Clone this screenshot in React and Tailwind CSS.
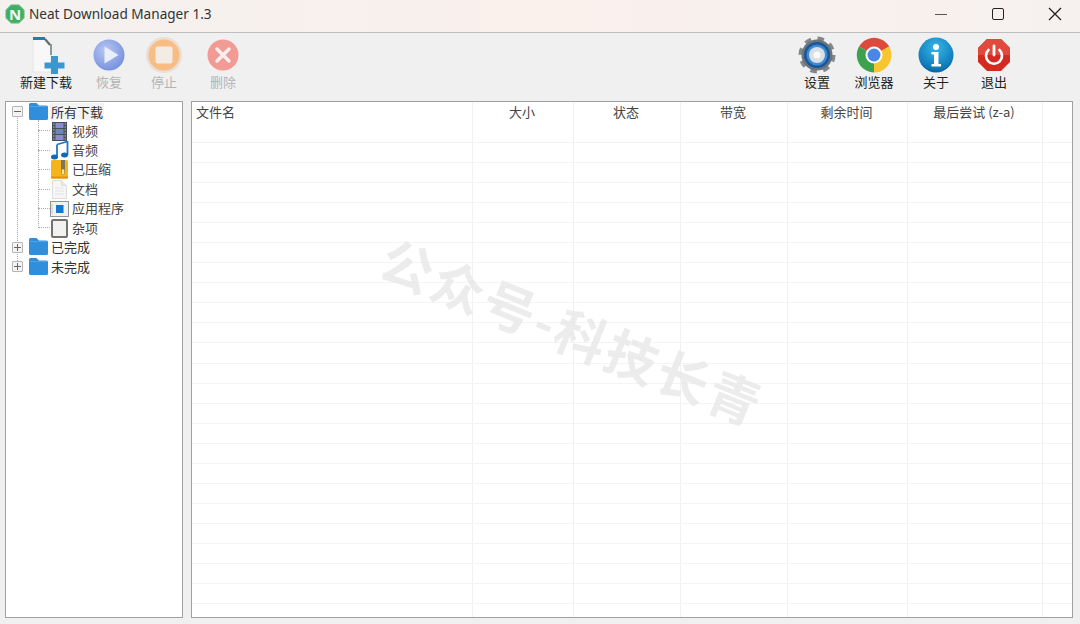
import React from 'react';

const cjk = "font-['Noto_Sans_CJK_SC','Noto_Sans',sans-serif]";

function AppLogo() {
  return (
    <svg width="20" height="20" viewBox="0 0 20 20">
      <path d="M6 0.500h8l5.500 5.500v8l-5.500 5.500h-8l-5.500-5.500v-8z" fill="#58b874" />
      <circle cx="10" cy="10" r="8.500" fill="#3fae62" />
      <text x="10" y="15.500" textAnchor="middle" fontSize="15" fontWeight="700" fontFamily="Noto Sans" fill="#f2fbf4">N</text>
    </svg>
  );
}

function NewIcon() {
  return (
    <svg width="40" height="38" viewBox="0 0 40 38">
      <path d="M7 2h13l5 6v28H7z" fill="#f8f8f8" stroke="#e6e6e6" />
      <rect x="7" y="1" width="12" height="3" fill="#1f7fb5" />
      <path d="M19 3l5 6" stroke="#666" strokeWidth="2" />
      <rect x="24" y="8" width="2" height="11" fill="#8a979c" />
      <path d="M25 20h7v6.500h6.500v6H32V38h-7v-5.500h-6.500v-6H25z" fill="#3b97cf" />
    </svg>
  );
}

function PlayIcon() {
  return (
    <svg width="34" height="34" viewBox="0 0 34 34">
      <defs>
        <radialGradient id="playFill" cx="0.4" cy="0.35" r="0.75">
          <stop offset="0" stopColor="#b8c7f2" />
          <stop offset="1" stopColor="#6f8bdc" />
        </radialGradient>
      </defs>
      <circle cx="17" cy="17" r="15.500" fill="url(#playFill)" />
      <path d="M12.500 8.500l14 8.500-14 8.500z" fill="#e9eefb" />
    </svg>
  );
}

function StopIcon() {
  return (
    <svg width="38" height="38" viewBox="0 0 38 38">
      <circle cx="19" cy="19" r="18" fill="#e9dfd6" />
      <circle cx="19" cy="19" r="15.500" fill="#f8bd85" />
      <rect x="10.500" y="10.500" width="17" height="17" rx="2" fill="#f3ece4" />
    </svg>
  );
}

function DeleteIcon() {
  return (
    <svg width="32" height="32" viewBox="0 0 32 32">
      <circle cx="16" cy="16" r="15.500" fill="#f29a94" />
      <path d="M10 10l12 12M22 10L10 22" stroke="#fbeeee" strokeWidth="3.500" strokeLinecap="round" />
    </svg>
  );
}

function GearIcon() {
  return (
    <svg width="38" height="38" viewBox="0 0 38 38">
      <circle cx="19" cy="19" r="16.500" fill="none" stroke="#83888d" strokeWidth="4" strokeDasharray="6.500 6.460" />
      <circle cx="19" cy="19" r="15.500" fill="#6d7378" />
      <circle cx="19" cy="19" r="13" fill="#17579e" />
      <circle cx="19" cy="19" r="10.500" fill="#3f8ad0" />
      <circle cx="19" cy="19" r="8" fill="#d8dfe6" />
      <circle cx="19" cy="19" r="3.500" fill="#fafafa" />
    </svg>
  );
}

function ChromeIcon() {
  return (
    <svg width="36" height="36" viewBox="0 0 36 36">
      <path d="M18 18L3 9.500A17.500 17.500 0 0 1 33.200 9.500z" fill="#dd4a3c" />
      <path d="M18 18L33.200 9.500A17.500 17.500 0 0 1 18 35.500z" fill="#f6c52f" />
      <path d="M18 18L18 35.500A17.500 17.500 0 0 1 3 9.500z" fill="#3da24f" />
      <circle cx="18" cy="18" r="8.500" fill="#fff" />
      <circle cx="18" cy="18" r="6.500" fill="#4a86e8" />
    </svg>
  );
}

function InfoIcon() {
  return (
    <svg width="36" height="36" viewBox="0 0 36 36">
      <defs>
        <radialGradient id="infoFill" cx="0.5" cy="0.3" r="0.8">
          <stop offset="0" stopColor="#38b6ea" />
          <stop offset="0.7" stopColor="#0f7dbb" />
          <stop offset="1" stopColor="#0b4f80" />
        </radialGradient>
      </defs>
      <circle cx="18" cy="18" r="17.500" fill="url(#infoFill)" />
      <circle cx="18" cy="10" r="3" fill="#fff" />
      <path d="M13.500 15h7v12h2.500v2.500H13.500V27h2.500v-9.500h-2.500z" fill="#fff" />
    </svg>
  );
}

function PowerIcon() {
  return (
    <svg width="34" height="34" viewBox="0 0 34 34">
      <path d="M10 1h14l9 9v14l-9 9H10l-9-9V10z" fill="#d42a1f" />
      <path d="M1 17V10l9-9h14l9 9v7z" fill="#e04a3c" />
      <path d="M11.500 12a8 8 0 1 0 11 0" fill="none" stroke="#fff" strokeWidth="2.600" strokeLinecap="round" />
      <path d="M17 8v9" stroke="#fff" strokeWidth="2.800" strokeLinecap="round" />
    </svg>
  );
}

function FolderIcon() {
  return (
    <svg width="19" height="17" viewBox="0 0 19 17">
      <path d="M0 1.500Q0 0 1.500 0h6l2.500 2.500h7.500Q19 2.500 19 4v11.500Q19 17 17.500 17h-16Q0 17 0 15.500z" fill="#2f8fdc" />
      <rect x="0" y="3" width="19" height="1" fill="#4aa3e8" />
    </svg>
  );
}

function FilmIcon() {
  return (
    <svg width="15" height="19" viewBox="0 0 15 19">
      <rect x="0" y="0" width="15" height="19" fill="#474f58" />
      <rect x="3.500" y="1" width="8" height="5" fill="#8a8dcf" />
      <rect x="3.500" y="7" width="8" height="5" fill="#6f86b8" />
      <rect x="3.500" y="13" width="8" height="5" fill="#8a8dcf" />
      <path d="M1 2h1.500M1 5h1.500M1 8h1.500M1 11h1.500M1 14h1.500M1 17h1.500M12.500 2h1.500M12.500 5h1.500M12.500 8h1.500M12.500 11h1.500M12.500 14h1.500M12.500 17h1.500" stroke="#b8bcc2" />
    </svg>
  );
}

function MusicIcon() {
  return (
    <svg width="18" height="19" viewBox="0 0 18 19">
      <path d="M6 3.500L16.500 0.500V14" fill="none" stroke="#1d78c8" strokeWidth="1.800" />
      <path d="M6 3.500V16" fill="none" stroke="#1d78c8" strokeWidth="1.800" />
      <ellipse cx="3.500" cy="16" rx="3.500" ry="2.500" fill="#1469b5" />
      <ellipse cx="13.500" cy="14" rx="3.500" ry="2.500" fill="#1469b5" />
    </svg>
  );
}

function ZipIcon() {
  return (
    <svg width="17" height="19" viewBox="0 0 17 19">
      <rect x="0" y="0" width="17" height="18.500" rx="1.500" fill="#f4b41a" />
      <rect x="0" y="16.500" width="17" height="2" fill="#e58f12" />
      <rect x="10" y="0" width="4" height="11" fill="#7a7660" />
      <rect x="10.500" y="9" width="3" height="5.500" rx="1" fill="#f9e29a" stroke="#9a7a20" strokeWidth="0.600" />
    </svg>
  );
}

function DocIcon() {
  return (
    <svg width="15" height="19" viewBox="0 0 15 19">
      <path d="M0.500 0.500h9l5 5v13h-14z" fill="#f6f6f6" stroke="#dcdcdc" />
      <path d="M9.500 0.500v5h5" fill="#e8e8e8" stroke="#dcdcdc" />
      <path d="M3 8h9M3 11h9M3 14h9" stroke="#e4e4e4" />
    </svg>
  );
}

function AppIcon() {
  return (
    <svg width="19" height="16" viewBox="0 0 19 16">
      <rect x="0.500" y="0.500" width="18" height="15" fill="#f0f1f2" stroke="#8f9499" />
      <rect x="6" y="4" width="7.500" height="8" fill="#1576cf" />
      <path d="M2 3v10" stroke="#c4c8cc" />
    </svg>
  );
}

function BoxIcon() {
  return (
    <svg width="17" height="19" viewBox="0 0 17 19">
      <rect x="1" y="1" width="15" height="17" rx="1" fill="#f2f2f0" stroke="#77736c" strokeWidth="2" />
    </svg>
  );
}

function ToolButton({ icon, label, width, disabled }) {
  return (
    <div className={`flex flex-col items-center ${width}`}>
      <div className="h-9 flex items-center justify-center">{icon}</div>
      <span className={`text-[13px] leading-[18px] ${disabled ? 'text-[#b4b4b4]' : 'text-[#222]'}`}>{label}</span>
    </div>
  );
}

function Expander({ open }) {
  return (
    <span className="w-[11px] h-[11px] border border-[#b5b5b5] bg-[#f4f4f4] rounded-[1px] flex items-center justify-center relative">
      <span className="w-[7px] h-px bg-[#666]" />
      {!open && <span className="absolute w-px h-[7px] bg-[#666]" />}
    </span>
  );
}

function RootRow({ label, open, selected }) {
  return (
    <div className="h-[19.400px] flex items-center pl-[6px]">
      <Expander open={open} />
      <span className="ml-[6px] mb-[1px] relative"><FolderIcon /></span>
      <span className={`ml-[2px] mb-[1px] px-[1px] text-[13px] leading-[17px] text-[#333] ${selected ? 'bg-[#f3f3f3]' : ''}`}>{label}</span>
    </div>
  );
}

function ChildRow({ icon, label }) {
  return (
    <div className="h-[19.400px] flex items-center relative pl-[39px]">
      <span className="absolute left-[27px] top-[9px] w-[12px] border-t border-dotted border-[#aaa]" />
      <span className="w-[19px] flex justify-center">{icon}</span>
      <span className="ml-[3px] mb-[2px] text-[13px] leading-[17px] text-[#444]">{label}</span>
    </div>
  );
}

const columns = 'grid grid-cols-[281px_101px_107px_107px_120px_135px_1fr]';
const headers = ['文件名', '大小', '状态', '带宽', '剩余时间', '最后尝试 (z-a)', ''];

export default function App() {
  return (
    <div className={`w-[1080px] h-[624px] bg-[#f0f0f0] flex flex-col overflow-hidden relative ${cjk}`}>
      {/* Title bar */}
      <div className="h-[33px] shrink-0 flex items-center pb-[4px] border-b border-[#bdbdbd] bg-gradient-to-r from-[#f4f1ef] via-[#faf0ec] to-[#f6f1ef]">
        <span className="ml-[5px] flex"><AppLogo /></span>
        <span className="ml-[4px] text-[13.600px] text-[#333] font-['Noto_Sans',sans-serif]">Neat Download Manager 1.3</span>
        <div className="ml-auto flex items-center gap-[43px] pr-[18px]">
          <div className="w-[14px] flex justify-center">
            <span className="w-[12px] h-px bg-[#555]" />
          </div>
          <div className="w-[14px] flex justify-center">
            <span className="w-[12px] h-[12px] border-[1.500px] border-[#222] rounded-[2px]" />
          </div>
          <div className="w-[14px] flex justify-center">
            <svg width="14" height="14" viewBox="0 0 14 14">
              <path d="M1 1l12 12M13 1L1 13" stroke="#222" strokeWidth="1.300" />
            </svg>
          </div>
        </div>
      </div>

      {/* Toolbar */}
      <div className="h-[68px] shrink-0 flex justify-between pl-[14px] pr-[62px] pt-[4px]">
        <div className="flex">
          <ToolButton icon={<NewIcon />} label="新建下载" width="w-[64px]" />
          <ToolButton icon={<PlayIcon />} label="恢复" width="w-[62px]" disabled />
          <ToolButton icon={<StopIcon />} label="停止" width="w-[48px]" disabled />
          <ToolButton icon={<DeleteIcon />} label="删除" width="w-[70px]" disabled />
        </div>
        <div className="flex">
          <ToolButton icon={<GearIcon />} label="设置" width="w-[58px]" />
          <ToolButton icon={<ChromeIcon />} label="浏览器" width="w-[56px]" />
          <ToolButton icon={<InfoIcon />} label="关于" width="w-[68px]" />
          <ToolButton icon={<PowerIcon />} label="退出" width="w-[48px]" />
        </div>
      </div>

      {/* Main panes */}
      <div className="h-[517px] shrink-0 flex pl-[5px] pr-[7px] gap-[8px]">
        <div className="w-[178px] border border-[#a0a0a0] bg-white relative">
          {/* tree connector lines */}
          <span className="absolute left-[11px] top-[16px] h-[145px] border-l border-dotted border-[#aaa]" />
          <span className="absolute left-[32px] top-[18px] h-[108px] border-l border-dotted border-[#aaa]" />
          <RootRow label="所有下载" open selected />
          <div className="relative pl-[5px]">
            <ChildRow icon={<FilmIcon />} label="视频" />
            <ChildRow icon={<MusicIcon />} label="音频" />
            <ChildRow icon={<ZipIcon />} label="已压缩" />
            <ChildRow icon={<DocIcon />} label="文档" />
            <ChildRow icon={<AppIcon />} label="应用程序" />
            <ChildRow icon={<BoxIcon />} label="杂项" />
          </div>
          <RootRow label="已完成" />
          <RootRow label="未完成" />
        </div>

        <div className="flex-1 border border-[#a0a0a0] bg-white overflow-hidden">
          <div className={`${columns} h-[41px] border-b border-[#f3f3f3]`}>
            {headers.map((h, i) => (
              <div key={i} className={`border-r border-[#f1f1f1] last:border-r-0 text-[13px] leading-[20px] text-[#444] ${i === 0 ? 'pl-[4px]' : 'text-center pr-[2px]'}`}>
                {h}
              </div>
            ))}
          </div>
          {Array.from({ length: 24 }).map((_, r) => (
            <div key={r} className={`${columns} h-[20.050px] border-b border-[#f4f4f4]`}>
              {headers.map((_, i) => (
                <div key={i} className="border-r border-[#f1f1f1] last:border-r-0" />
              ))}
            </div>
          ))}
        </div>
      </div>

      {/* Watermark */}
      <div className="absolute left-[573px] top-[331px] -translate-x-1/2 -translate-y-1/2 rotate-[22deg] whitespace-nowrap text-[52px] leading-none font-bold text-[#e8e8e8] opacity-80 tracking-[3px] pointer-events-none">
        公众号-科技长青
      </div>
    </div>
  );
}
